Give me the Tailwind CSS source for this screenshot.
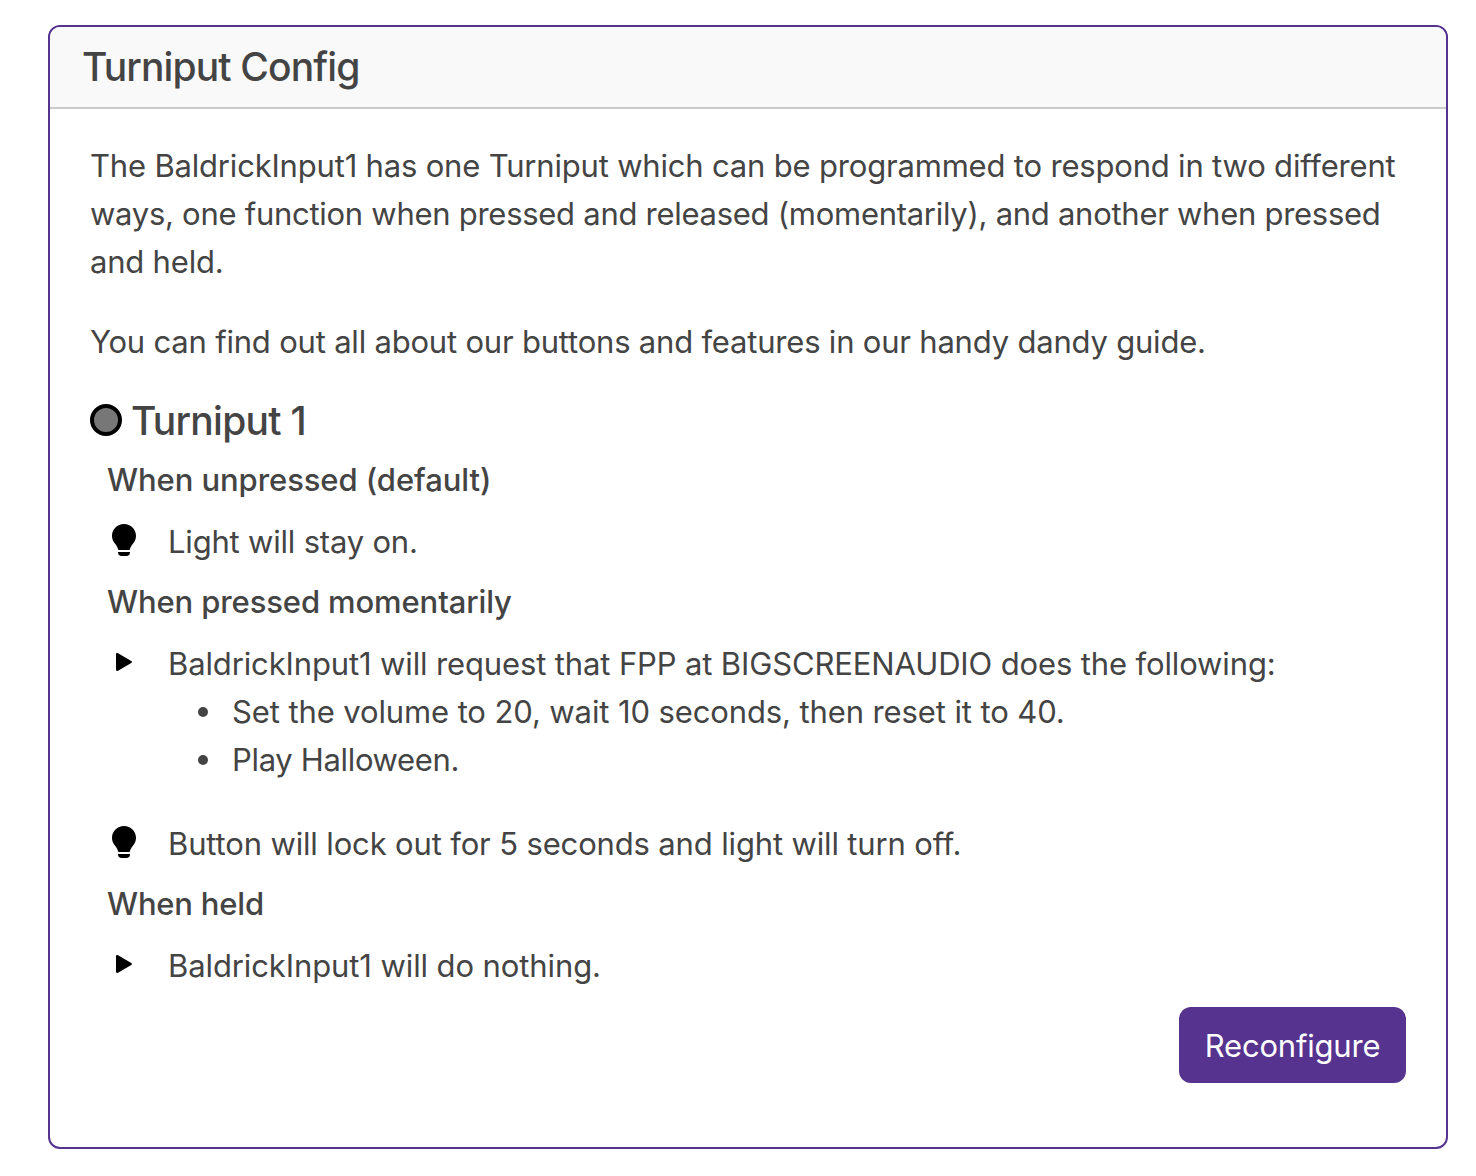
<!DOCTYPE html>
<html lang="en">
<head>
<meta charset="utf-8">
<title>Turniput Config</title>
<script src="https://cdn.jsdelivr.net/npm/@tailwindcss/browser@4"></script>
</head>
<body class="bg-white font-['Inter',sans-serif] text-[#444] text-[31px] leading-[48px] tracking-[-0.2px] w-[1476px] h-[1176px] pt-[25px] pl-12 overflow-hidden">
<svg class="hidden">
  <symbol id="bulb" viewBox="0 0 24 32"><path d="M12 0C5.300 0 0 5.200 0 12c0 3.300 1.300 5.600 3.300 8C5 22 5.500 23.300 6 25.200Q6.200 26 7 26H17Q17.800 26 18 25.200C18.500 23.300 19 22 20.700 20 22.700 17.600 24 15.300 24 12 24 5.200 18.700 0 12 0ZM6 28H18V28.500C18 30.500 16.500 32 14.500 32H9.500C7.500 32 6 30.500 6 28.500Z"/></symbol>
  <symbol id="play" viewBox="0 0 16 18"><path d="M0 1.200C0 .1 1 -.3 2 .3L15.300 8.100Q16.600 9 15.300 9.900L2 17.700C1 18.300 0 17.900 0 16.800Z"/></symbol>
</svg>
<main class="w-[1400px] h-[1124px] border-2 border-[#55338f] rounded-[12px] overflow-hidden whitespace-nowrap">
  <header class="h-[82px] bg-[#f9f9f9] border-b-2 border-[#cbcbcb] pl-8 pt-4">
    <h1 class="w-max text-[39px] font-[550] leading-[48px] tracking-[-0.88px]">Turniput Config</h1>
  </header>
  <div class="pl-10 pr-10 pt-[33px]">
    <p><span class="tracking-[-0.185px]">The BaldrickInput1 has one Turniput which can be programmed to respond in two different</span><br><span class="tracking-[-0.275px]">ways, one function when pressed and released (momentarily), and another when pressed</span><br><span>and held.</span></p>
    <p class="mt-8"><span>You can find out all about our buttons and features in our handy dandy guide.</span></p>
    <h2 class="mt-[30px] flex items-center h-12 text-[39px] font-[550] leading-[48px] tracking-[-0.75px]">
      <svg class="w-8 h-8 mr-[9px]" viewBox="0 0 32 32"><circle cx="16" cy="16" r="14" fill="#777" stroke="#000" stroke-width="4"/></svg>
      <span class="pt-0.5">Turniput 1</span>
    </h2>
    <section class="pl-[17px] pt-3">
      <h3 class="font-[550]"><span class="tracking-[-0.08px]">When unpressed (default)</span></h3>
      <div class="mt-3.5 flex">
        <svg class="w-6 h-8 mt-1.5 ml-[5px] mr-8"><use href="#bulb"/></svg>
        <p>Light will stay on.</p>
      </div>
      <h3 class="mt-3 font-[550]"><span class="tracking-[-0.12px]">When pressed momentarily</span></h3>
      <div class="mt-3.5 flex">
        <svg class="w-4 h-[18px] mt-[13px] ml-[9px] mr-9"><use href="#play"/></svg>
        <div>
          <p class="tracking-[-0.13px]">BaldrickInput1 will request that FPP at BIGSCREENAUDIO does the following:</p>
          <ul class="pl-[30px]">
            <li class="flex items-center gap-6"><i class="size-2.5 rounded-full bg-[#444]"></i><span class="tracking-[-0.11px]">Set the volume to 20, wait 10 seconds, then reset it to 40.</span></li>
            <li class="flex items-center gap-6"><i class="size-2.5 rounded-full bg-[#444]"></i><span class="tracking-[-0.33px]">Play Halloween.</span></li>
          </ul>
        </div>
      </div>
      <div class="mt-9 flex">
        <svg class="w-6 h-8 mt-1.5 ml-[5px] mr-8"><use href="#bulb"/></svg>
        <p class="tracking-[-0.15px]">Button will lock out for 5 seconds and light will turn off.</p>
      </div>
      <h3 class="mt-3 font-[550]"><span>When held</span></h3>
      <div class="mt-3.5 flex">
        <svg class="w-4 h-[18px] mt-[13px] ml-[9px] mr-9"><use href="#play"/></svg>
        <p class="tracking-[-0.1px]">BaldrickInput1 will do nothing.</p>
      </div>
    </section>
    <div class="mt-[17px] flex justify-end">
      <button class="w-[227px] h-[76px] pt-0.5 rounded-[12px] bg-[#55338f] text-white">Reconfigure</button>
    </div>
  </div>
</main>
</body>
</html>
